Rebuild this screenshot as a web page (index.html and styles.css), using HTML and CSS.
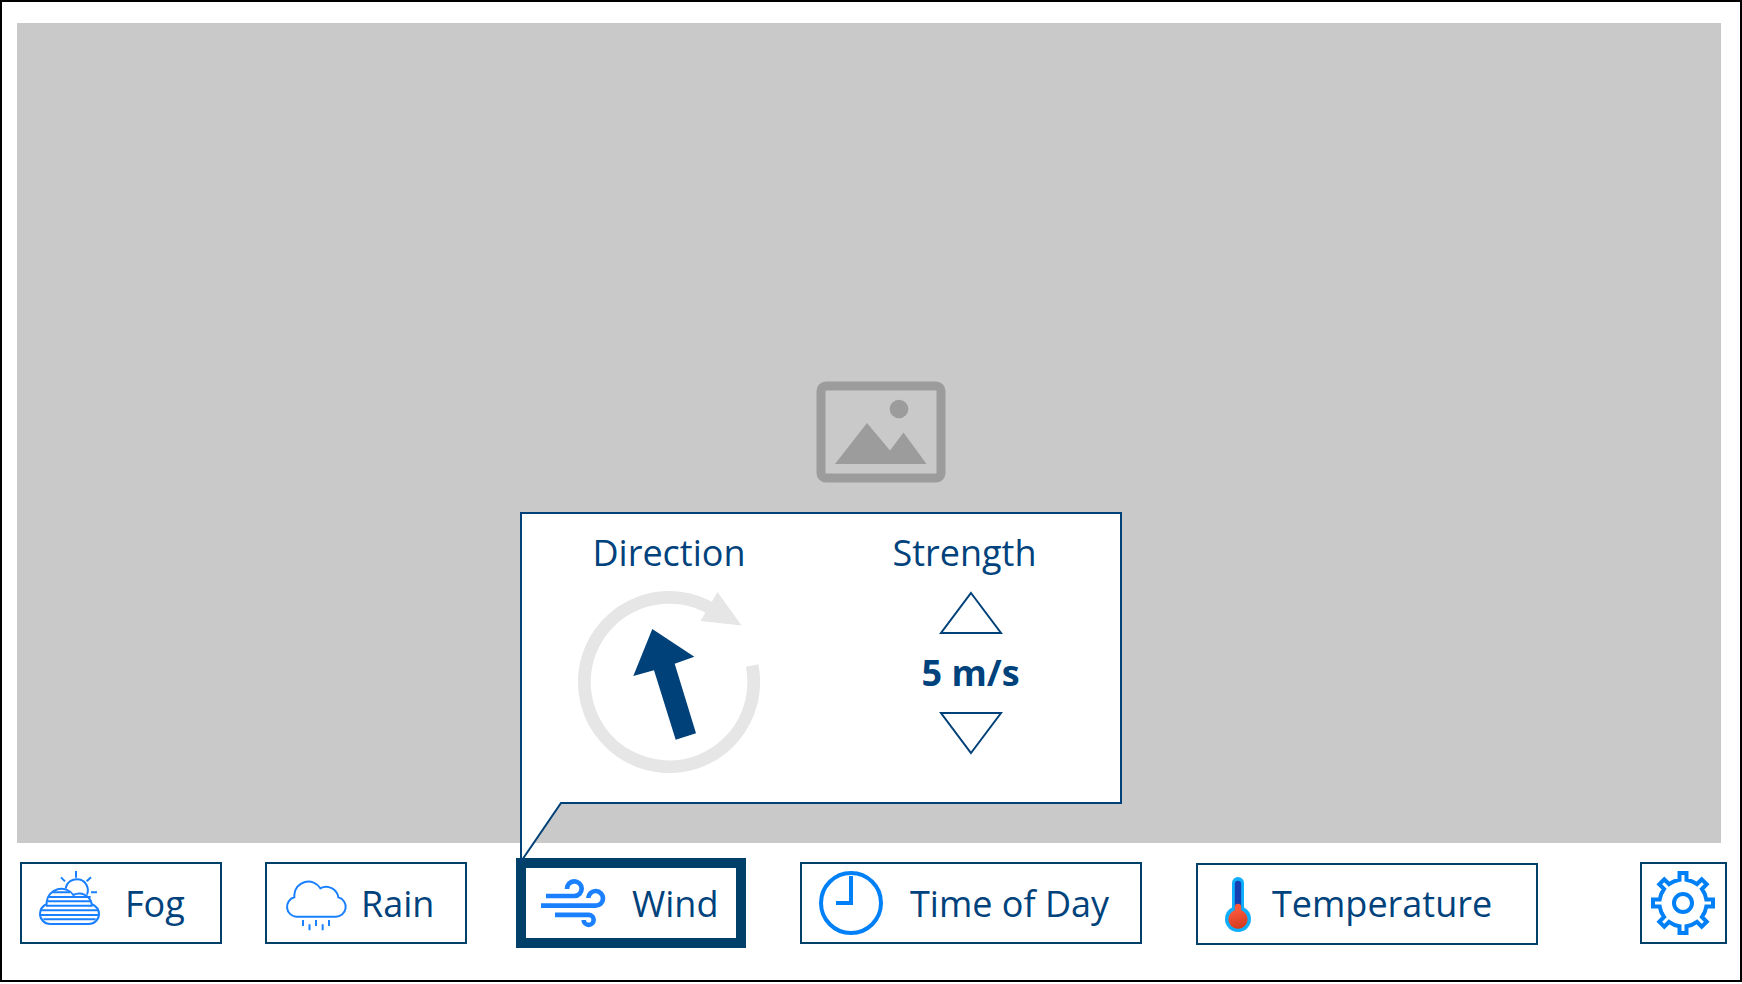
FILE: index.html
```html
<!DOCTYPE html>
<html lang="en">
<head>
<meta charset="utf-8">
<title>Weather controls</title>
<link rel="stylesheet" href="styles.css">
</head>
<body>
<div class="frame">
  <main class="scene">
    <svg class="scene-icon" viewBox="0 0 130 102" role="img" aria-label="Scene preview">
      <rect x="5" y="5" width="120" height="92" rx="5" fill="none" stroke="#9c9c9c" stroke-width="9"/>
      <circle cx="83" cy="28" r="9.3" fill="#9c9c9c"/>
      <path d="M19 83 51 42 74 69.500 87.500 51.500 110.500 83Z" fill="#9c9c9c"/>
    </svg>
  </main>

  <nav class="toolbar" aria-label="Weather settings">
    <button class="tool tool-fog" type="button">
      <svg class="icon" viewBox="108 93 192 192" fill="none" stroke="#1a80ff" stroke-width="6" aria-hidden="true">
        <path d="M228 93V113M183 112 195 124M273 112 260 124M273 157H291"/>
        <path d="M197 146A33.500 33.500 0 1 1 261 164"/>
        <path d="M140 192V186A44 44 0 0 1 220 165A38 38 0 0 1 275 192C288 198 297 208 297 222A30 30 0 0 1 267 252H150A30 30 0 0 1 120 222C120 208 128 198 140 192Z"/>
        <path d="M157 157H210M147 171H272M142 184H274M138 197H278M123 211H294M120 225H297M130 238H287"/>
      </svg>
      <span class="label">Fog</span>
    </button>

    <button class="tool tool-rain" type="button">
      <svg class="icon" viewBox="102 93 192 192" fill="none" stroke="#1a80ff" stroke-width="6" aria-hidden="true">
        <path d="M133 172V165A42 42 0 0 1 211 145A37 37 0 0 1 265 172A29.500 29.500 0 0 1 256 230H140A29.500 29.500 0 0 1 133 172Z"/>
        <path d="M159 240V258M178.500 253V271M198 240V258M218 253V271M237 240V258"/>
      </svg>
      <span class="label">Rain</span>
    </button>

    <div class="tool-group">
      <button class="tool tool-wind" type="button" aria-expanded="true" aria-controls="wind-panel">
        <svg class="icon icon-wind" viewBox="120 273 198 192" fill="none" stroke="#1a80ff" stroke-width="14" aria-hidden="true">
          <path d="M138 348H223A22 22 0 1 0 201 327"/>
          <path d="M123 377H287A22 22 0 1 0 265 354"/>
          <path d="M165 404.500H267A15 15 0 1 1 251 420"/>
        </svg>
        <span class="label">Wind</span>
      </button>

      <section class="panel" id="wind-panel" aria-label="Wind">
        <div class="column column-direction">
          <h2 class="heading heading-direction">Direction</h2>
          <button class="plain" type="button" aria-label="Rotate wind direction">
            <svg class="dial" viewBox="0 0 182 182" aria-hidden="true">
              <path d="M174.100 74.400A84.700 84.700 0 1 1 135.900 19.200" fill="none" stroke="#e6e6e6" stroke-width="12.700"/>
              <path d="M163.500 34.500 122.500 30 139.500 1Z" fill="#e6e6e6"/>
              <path d="M74.300 38 116.300 65.700 96.700 72.700 118 142.300 97.700 148.700 76 79.300 55.300 85Z" fill="#004179"/>
            </svg>
          </button>
        </div>
        <div class="column">
          <h2 class="heading heading-strength">Strength</h2>
          <button class="plain" type="button" aria-label="Increase strength">
            <svg class="step" viewBox="0 0 64 44" aria-hidden="true"><path d="M32 2 62 42H2Z" fill="#fff" stroke="#004179" stroke-width="2"/></svg>
          </button>
          <output class="value">5 m/s</output>
          <button class="plain" type="button" aria-label="Decrease strength">
            <svg class="step" viewBox="0 0 64 44" aria-hidden="true"><path d="M32 42 62 2H2Z" fill="#fff" stroke="#004179" stroke-width="2"/></svg>
          </button>
        </div>
        <svg class="tail" viewBox="0 0 44 62" aria-hidden="true">
          <path d="M1 0H42L41 1 1 60Z" fill="#fff"/>
          <path d="M1 0V59.500L41 1H44" fill="none" stroke="#004179" stroke-width="2"/>
        </svg>
      </section>
    </div>

    <button class="tool tool-time" type="button">
      <svg class="icon" viewBox="117 93 192 192" fill="none" stroke="#0080f6" stroke-width="12" aria-hidden="true">
        <circle cx="213" cy="189" r="90"/>
        <path d="M213 108V189H168"/>
      </svg>
      <span class="label">Time of Day</span>
    </button>

    <button class="tool tool-temperature" type="button">
      <svg class="icon icon-temperature" viewBox="132 96 84 192" fill="none" stroke-linecap="round" aria-hidden="true">
        <defs>
          <linearGradient id="mercury" gradientUnits="userSpaceOnUse" x1="165" y1="195" x2="185" y2="265">
            <stop offset="0.200" stop-color="#fd573b"/>
            <stop offset="1" stop-color="#cf3b1f"/>
          </linearGradient>
        </defs>
        <path d="M174 129V230" stroke="#0faffe" stroke-width="36"/>
        <circle cx="174" cy="237" r="39" fill="#0faffe"/>
        <path d="M174 132V215" stroke="#163fb1" stroke-width="19"/>
        <path d="M164.500 213V201A9.500 9.500 0 0 1 183.500 201V211A28.500 28.500 0 1 1 164.500 211Z" fill="url(#mercury)"/>
      </svg>
      <span>Temperature</span>
    </button>

    <button class="tool tool-settings" type="button" aria-label="Settings">
      <svg class="icon" viewBox="-96 -96 192 192" fill="none" stroke="#0080f6" stroke-width="12" aria-hidden="true">
        <path d="M-10.500-70V-90H10.500V-70A71 71 0 0 1 42.100-56.900L56.200-71.100 71.100-56.200 56.900-42.100A71 71 0 0 1 70-10.500H90V10.500H70A71 71 0 0 1 56.900 42.100L71.100 56.200 56.200 71.100 42.100 56.900A71 71 0 0 1 10.500 70V90H-10.500V70A71 71 0 0 1-42.100 56.900L-56.200 71.100-71.100 56.200-56.900 42.100A71 71 0 0 1-70 10.500H-90V-10.500H-70A71 71 0 0 1-56.900-42.100L-71.100-56.200-56.200-71.100-42.100-56.900A71 71 0 0 1-10.500-70Z"/>
        <circle r="27"/>
      </svg>
    </button>
  </nav>
</div>
</body>
</html>
```
FILE: styles.css
```css
* {
  box-sizing: border-box;
}

body {
  margin: 0;
  background: #fff;
  color: #00427c;
  font: 36px/48px "Open Sans", "Noto Sans", sans-serif;
}

button {
  margin: 0;
  color: inherit;
  font: inherit;
  cursor: pointer;
}

svg {
  display: block;
  flex: none;
}

.frame {
  display: flex;
  flex-direction: column;
  min-height: calc(100vh - 2px);
  border: 2px solid #000;
}

.scene {
  display: flex;
  flex: 1;
  align-items: center;
  justify-content: center;
  margin: 21px 19px 0 15px;
  padding: 0 0 2px 23px;
  background: #c9c9c9;
}

.scene-icon {
  width: 130px;
  height: 102px;
}

.toolbar {
  display: flex;
  align-items: center;
  padding: 15px 13px 32px 18px;
}

.tool {
  display: flex;
  align-items: center;
  height: 82px;
  padding: 0 14px;
  border: 2px solid #004069;
  background: #fff;
  white-space: nowrap;
}

.label {
  padding-top: 2px;
}

.icon {
  width: 64px;
  height: 64px;
}

.icon-wind {
  width: 66px;
}

.icon-temperature {
  width: 28px;
}

.tool-fog {
  width: 202px;
  gap: 25px;
}

.tool-rain {
  width: 202px;
  gap: 13px;
  margin-left: 43px;
  padding-left: 17px;
}

.tool-group {
  position: relative;
  margin-left: 49px;
}

.tool-wind {
  width: 230px;
  height: 90px;
  gap: 26px;
  border-width: 10px;
}

.tool-time {
  width: 342px;
  gap: 27px;
  margin-left: 54px;
  padding-left: 17px;
}

.tool-temperature {
  width: 342px;
  gap: 20px;
  margin-top: 2px;
  margin-left: 54px;
  padding-left: 26px;
}

.tool-settings {
  justify-content: center;
  width: 87px;
  margin-left: auto;
  padding: 0 1px 0 0;
}

.panel {
  position: absolute;
  bottom: calc(100% + 54px);
  left: 4px;
  display: grid;
  grid-template-columns: 1fr 1fr;
  width: 602px;
  height: 292px;
  padding-top: 15px;
  border: 2px solid #004179;
  background: #fff;
}

.column {
  display: flex;
  flex-direction: column;
  align-items: center;
}

.column-direction {
  padding-right: 6px;
}

.heading {
  margin: 0 0 14px;
  font-size: 36px;
  font-weight: 400;
}

.heading-direction {
  padding-left: 1px;
}

.heading-strength {
  padding-right: 12px;
}

.plain {
  padding: 0;
  border: 0;
  background: none;
}

.dial {
  width: 182px;
  height: 182px;
}

.step {
  width: 64px;
  height: 44px;
}

.value {
  margin: 14px 0;
  font-weight: 700;
}

.tail {
  position: absolute;
  top: 100%;
  left: -2px;
  width: 44px;
  height: 62px;
}
```
